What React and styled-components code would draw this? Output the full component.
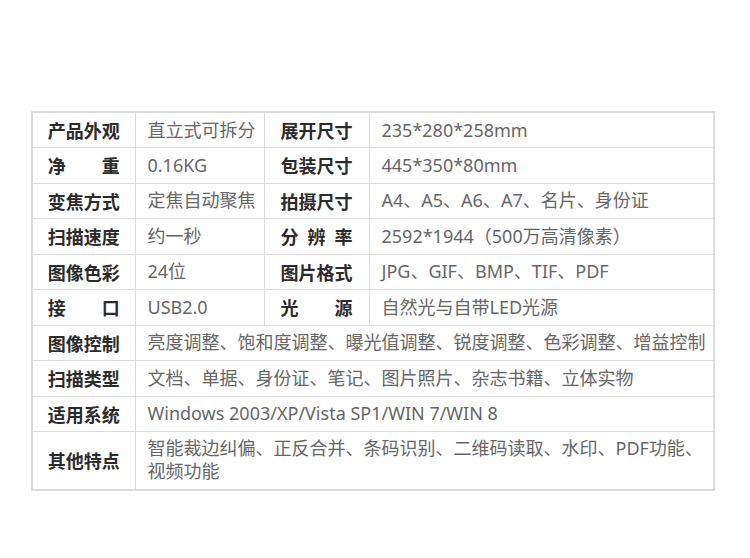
import React from 'react'
import styled, { createGlobalStyle } from 'styled-components'

const Global = createGlobalStyle`
  html, body {
    margin: 0;
    padding: 0;
    background: #fff;
  }
  body {
    font-family: "Noto Sans", "Noto Sans CJK SC", sans-serif;
  }
`

const Page = styled.div`
  padding: 111px 0 0 31px;
`

const Table = styled.table`
  width: 684px;
  table-layout: fixed;
  border-collapse: collapse;
  border: 2px solid #dcdcdc;
  font-size: 18px;
`

const Row = styled.tr`
  height: ${p => (p.$tall ? '58px' : '35.5px')};
`

const Label = styled.th`
  border: 1px solid #dcdcdc;
  padding: 0 2px;
  font-weight: 700;
  color: #2b2b2b;
  text-align: center;
  vertical-align: middle;
  white-space: nowrap;
  font-family: "Noto Sans CJK SC", sans-serif;
`

const Spread = styled.span`
  display: inline-block;
  width: 72px;
  text-align: justify;
  text-align-last: justify;
`

const Value = styled.td`
  border: 1px solid #dcdcdc;
  padding: 0 4px 0 12px;
  color: #666;
  vertical-align: middle;
  line-height: 23px;
  font-family: "Noto Sans", "Noto Sans CJK SC", sans-serif;
`

const pairs = [
  ['产品外观', '直立式可拆分', '展开尺寸', '235*280*258mm'],
  ['净重', '0.16KG', '包装尺寸', '445*350*80mm'],
  ['变焦方式', '定焦自动聚焦', '拍摄尺寸', 'A4、A5、A6、A7、名片、身份证'],
  ['扫描速度', '约一秒', '分辨率', '2592*1944（500万高清像素）'],
  ['图像色彩', '24位', '图片格式', 'JPG、GIF、BMP、TIF、PDF'],
  ['接口', 'USB2.0', '光源', '自然光与自带LED光源'],
]

const wide = [
  ['图像控制', '亮度调整、饱和度调整、曝光值调整、锐度调整、色彩调整、增益控制'],
  ['扫描类型', '文档、单据、身份证、笔记、图片照片、杂志书籍、立体实物'],
  ['适用系统', 'Windows 2003/XP/Vista SP1/WIN 7/WIN 8'],
  ['其他特点', '智能裁边纠偏、正反合并、条码识别、二维码读取、水印、PDF功能、视频功能'],
]

const Head = ({ text }) => <Label><Spread>{text}</Spread></Label>

export default function App() {
  return (
    <Page>
      <Global />
      <Table>
        <colgroup>
          <col style={{ width: 103 }} />
          <col style={{ width: 129 }} />
          <col style={{ width: 105 }} />
          <col />
        </colgroup>
        <tbody>
          {pairs.map(([a, b, c, d]) => (
            <Row key={a}>
              <Head text={a} />
              <Value>{b}</Value>
              <Head text={c} />
              <Value>{d}</Value>
            </Row>
          ))}
          {wide.map(([a, b], i) => (
            <Row key={a} $tall={i === wide.length - 1}>
              <Head text={a} />
              <Value colSpan={3}>{b}</Value>
            </Row>
          ))}
        </tbody>
      </Table>
    </Page>
  )
}
